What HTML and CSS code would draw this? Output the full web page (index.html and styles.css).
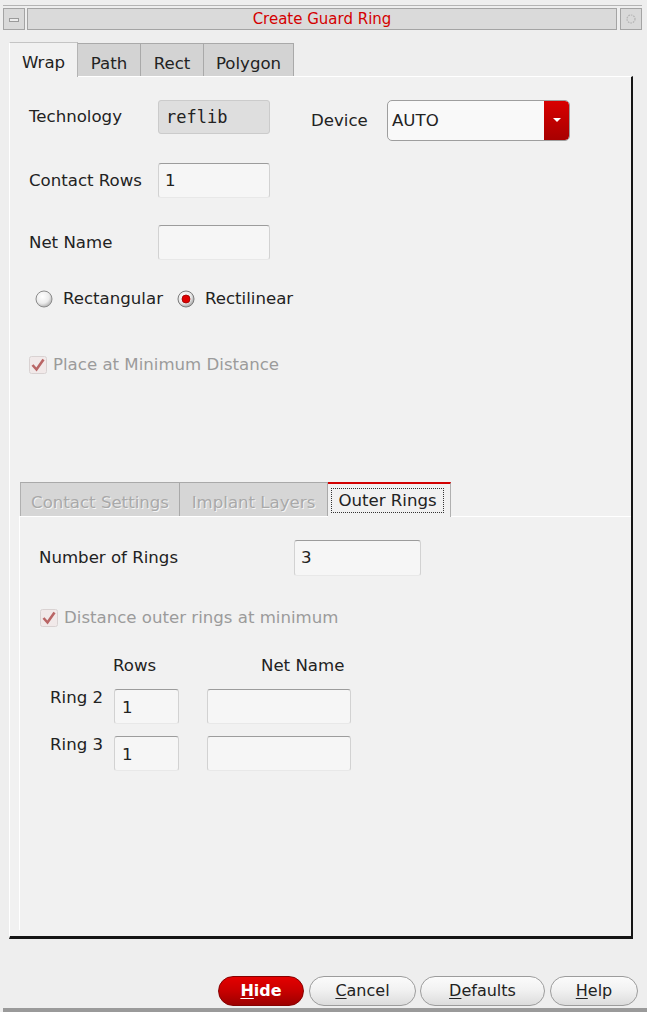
FILE: index.html
```html
<!DOCTYPE html>
<html>
<head>
<meta charset="utf-8">
<title>Create Guard Ring</title>
<link rel="stylesheet" href="styles.css">
</head>
<body>
<div class="window">
  <div class="topline"></div>
  <div class="titlebar">
    <div class="tb-btn"><span class="minbar"></span></div>
    <div class="tb-title">Create Guard Ring</div>
    <div class="tb-btn">
      <svg width="12" height="12" viewBox="0 0 12 12"><circle cx="6" cy="6" r="4" fill="none" stroke="#b4b4b4" stroke-width="1.2" stroke-dasharray="1.6 1"/></svg>
    </div>
  </div>

  <div class="tabs outer-tabs">
    <div class="tab active t-wrap">Wrap</div>
    <div class="tab t-path">Path</div>
    <div class="tab t-rect">Rect</div>
    <div class="tab t-poly">Polygon</div>
  </div>

  <div class="panel">
    <div class="form">
      <div class="row r1">
        <div class="lbl lbl-tech">Technology</div>
        <div class="field ro">reflib</div>
        <div class="lbl lbl-dev">Device</div>
        <div class="combo">
          <span class="combo-text">AUTO</span>
          <span class="combo-btn">
            <svg width="10" height="6" viewBox="0 0 10 6"><polygon points="1,1 9,1 5,5" fill="#fff"/></svg>
          </span>
        </div>
      </div>
      <div class="row r2">
        <div class="lbl lbl-tech lh35">Contact Rows</div>
        <div class="field txt w112">1</div>
      </div>
      <div class="row r3">
        <div class="lbl lbl-tech lh35">Net Name</div>
        <div class="field txt w112"></div>
      </div>
      <div class="row radios">
        <span class="radio">
          <svg width="18" height="18" viewBox="0 0 18 18">
            <defs>
              <radialGradient id="rg1" cx="40%" cy="35%" r="70%">
                <stop offset="0" stop-color="#ffffff"/>
                <stop offset="0.6" stop-color="#ececec"/>
                <stop offset="1" stop-color="#a9a9a9"/>
              </radialGradient>
            </defs>
            <circle cx="9" cy="9" r="8" fill="url(#rg1)" stroke="#8c8c8c" stroke-width="1"/>
          </svg>
        </span>
        <span class="radio-lbl">Rectangular</span>
        <span class="radio r-second">
          <svg width="18" height="18" viewBox="0 0 18 18">
            <defs>
              <radialGradient id="rg2" cx="40%" cy="35%" r="70%">
                <stop offset="0" stop-color="#ffffff"/>
                <stop offset="0.6" stop-color="#e8e8e8"/>
                <stop offset="1" stop-color="#9c9c9c"/>
              </radialGradient>
            </defs>
            <circle cx="9" cy="9" r="8" fill="url(#rg2)" stroke="#7c7c7c" stroke-width="1"/>
            <circle cx="9" cy="9" r="4" fill="#e00000" stroke="#9a0000" stroke-width="0.8"/>
          </svg>
        </span>
        <span class="radio-lbl">Rectilinear</span>
      </div>
      <div class="row check c-place">
        <span class="cbox">
          <svg width="18" height="18" viewBox="0 0 18 18">
            <rect x="0.5" y="0.5" width="17" height="17" rx="2" fill="#f1e9e9" stroke="#d9d2d2"/>
            <path d="M3.5 9 L7.5 13.5 L14.5 3.5" fill="none" stroke="#b96565" stroke-width="2.6"/>
          </svg>
        </span>
        <span class="dis">Place at Minimum Distance</span>
      </div>
    </div>

    <div class="notebook inner">
      <div class="tabs inner-tabs">
        <div class="tab itab dis-tab t-cs">Contact Settings</div>
        <div class="tab itab dis-tab t-il">Implant Layers</div>
        <div class="tab itab iactive t-or"><span class="focus">Outer Rings</span></div>
      </div>
      <div class="subpanel">
        <div class="row nrow">
          <div class="lbl lbl-num">Number of Rings</div>
          <div class="field txt w127">3</div>
        </div>
        <div class="row check c-dist">
          <span class="cbox">
            <svg width="18" height="18" viewBox="0 0 18 18">
              <rect x="0.5" y="0.5" width="17" height="17" rx="2" fill="#f1e9e9" stroke="#d9d2d2"/>
              <path d="M3.5 9 L7.5 13.5 L14.5 3.5" fill="none" stroke="#b96565" stroke-width="2.6"/>
            </svg>
          </span>
          <span class="dis">Distance outer rings at minimum</span>
        </div>
        <div class="row hdr">
          <span class="h-rows">Rows</span>
          <span class="h-net">Net Name</span>
        </div>
        <div class="row ring r-ring2">
          <div class="ring-lbl">Ring 2</div>
          <div class="field txt w65 rf">1</div>
          <div class="field txt w144"></div>
        </div>
        <div class="row ring r-ring3">
          <div class="ring-lbl">Ring 3</div>
          <div class="field txt w65 rf">1</div>
          <div class="field txt w144"></div>
        </div>
      </div>
    </div>
  </div>

  <div class="buttons">
    <div class="btn primary b-hide"><u>H</u>ide</div>
    <div class="btn b-cancel"><u>C</u>ancel</div>
    <div class="btn b-def"><u>D</u>efaults</div>
    <div class="btn b-help"><u>H</u>elp</div>
  </div>
  <div class="bottombar"></div>
</div>
</body>
</html>
```

FILE: styles.css
```css
* { box-sizing: border-box; }
html, body { margin: 0; padding: 0; }
body {
  width: 647px;
  height: 1012px;
  overflow: hidden;
  background: #eeeeee;
  font-family: "DejaVu Sans", "Liberation Sans", sans-serif;
  font-size: 16.6px;
  color: #222;
}
.window { display: flex; flex-direction: column; height: 1012px; }

.topline { margin: 5px 5px 0 3px; height: 1px; background: #b4b4b4; }

.titlebar {
  display: flex;
  margin: 2px 5px 0 3px;
  height: 22px;
}
.tb-btn {
  width: 22px;
  height: 22px;
  background: #d9d9d9;
  border: 1px solid #a4a4a4;
  display: flex;
  align-items: center;
  justify-content: center;
}
.minbar {
  width: 10px;
  height: 4px;
  background: #ececec;
  border: 1px solid #9a9a9a;
  margin-top: 1px;
}
.tb-title {
  flex: 1;
  margin: 0 3px 0 2px;
  background: #dadada;
  border: 1px solid #a4a4a4;
  color: #d40000;
  font-size: 15px;
  text-align: center;
  line-height: 20px;
}

/* outer tabs */
.tabs { display: flex; align-items: flex-end; }
.outer-tabs { margin-top: 11px; padding-left: 9px; height: 35px; position: relative; z-index: 2; }
.tab {
  height: 33px;
  background: #d3d3d3;
  border: 1px solid #a9a9a9;
  border-bottom: none;
  border-left: none;
  text-align: center;
  padding-top: 8px;
  line-height: 24px;
  color: #222;
}
.tab.active {
  height: 35px;
  margin-bottom: -1px;
  background: #f1f1f1;
  border-left: 1px solid #ffffff;
  border-top: 1px solid #c4c4c4;
  border-right: 1px solid #b4b4b4;
}
.t-wrap { width: 69px; }
.t-path { width: 63px; }
.t-rect { width: 63px; }
.t-poly { width: 90px; }

.panel {
  margin-left: 9px;
  width: 624px;
  height: 864px;
  background: #f1f1f1;
  border-top: 1px solid #ffffff;
  border-left: 1px solid #ffffff;
  border-right: 2px solid #151515;
  border-bottom: 3px solid #151515;
  padding: 23px 0 6px 9px;
  display: flex;
  flex-direction: column;
}
.form { padding-left: 10px; }
.row { display: flex; align-items: flex-start; }

.lbl { white-space: nowrap; }
.lbl-tech { width: 129px; height: 34px; line-height: 34px; }
.lh35 { height: 35px; line-height: 35px; }
.lbl-dev { width: 76px; margin-left: 41px; height: 41px; line-height: 41px; }

.field {
  height: 35px;
  line-height: 33px;
  padding-left: 6px;
  background: #f6f6f6;
  border: 1px solid #d2d2d2;
  border-top-color: #9c9c9c;
  border-bottom-color: #e8e8e8;
  border-radius: 3px;
}
.field.ro {
  width: 112px;
  height: 34px;
  line-height: 32px;
  padding-left: 7px;
  background: #dedede;
  border: 1px solid #cbcbcb;
  font-family: "DejaVu Sans Mono", "Liberation Mono", monospace;
  font-size: 17px;
}
.w112 { width: 112px; }
.w127 { width: 127px; height: 36px; line-height: 34px; }
.w65 { width: 65px; }
.w144 { width: 144px; }
.rf { padding-left: 7px; line-height: 35px; }

.combo {
  width: 183px;
  height: 41px;
  display: flex;
  background: #f9f9f9;
  border: 1px solid #9e9e9e;
  border-radius: 5px;
  overflow: hidden;
}
.combo-text { flex: 1; line-height: 39px; padding-left: 4px; }
.combo-btn {
  width: 25px;
  background: linear-gradient(#d80000, #a80000);
  display: flex;
  align-items: center;
  justify-content: center;
  border-radius: 0 4px 4px 0;
}
.r2 { margin-top: 22px; }
.r3 { margin-top: 27px; }

.radios { margin-top: 30px; height: 18px; align-items: center; padding-left: 6px; }
.radio { width: 18px; height: 18px; display: block; }
.radio svg { display: block; }
.radio-lbl { margin-left: 10px; line-height: 18px; }
.r-second { margin-left: 14px; }

.check { height: 18px; align-items: center; }
.cbox { width: 18px; height: 18px; display: block; }
.cbox svg { display: block; }
.dis { color: #9b9b9b; margin-left: 7px; line-height: 18px; white-space: nowrap; }
.c-place { margin-top: 48px; padding-left: 0; }
.c-place .dis { margin-left: 6px; }

/* inner notebook */
.notebook.inner {
  margin-top: 108px;
  flex: 1;
  display: flex;
  flex-direction: column;
}
.inner-tabs { padding-left: 1px; height: 34px; position: relative; z-index: 2; }
.itab { height: 34px; }
.tab.itab:first-child { border-left: 1px solid #b0b0b0; }
.dis-tab { color: #a9a9a9; text-shadow: 1px 1px 0 #f4f4f4; background: #d6d6d6; }
.t-cs { width: 160px; }
.t-il { width: 148px; }
.t-or {
  width: 123px;
  background: #f1f1f1;
  border-top: 2px solid #d20000;
  border-right: 1px solid #b0b0b0;
  padding-top: 4px;
  padding-left: 3px;
  text-align: left;
  height: 35px;
  margin-bottom: -1px;
}
.focus {
  display: inline-block;
  width: 113px;
  height: 25px;
  line-height: 23px;
  border: 1px dotted #333;
  text-align: center;
}
.subpanel {
  flex: 1;
  border-top: 1px solid #ffffff;
  border-left: 1px solid #ffffff;
  padding: 23px 0 0 19px;
}
.lbl-num { width: 255px; height: 36px; line-height: 36px; }
.c-dist { margin-top: 33px; padding-left: 1px; }
.c-dist .dis { margin-left: 6px; }
.hdr { margin-top: 29px; height: 20px; line-height: 20px; padding-left: 74px; }
.h-rows { width: 148px; }
.ring { padding-left: 11px; }
.r-ring2 { margin-top: 13px; }
.r-ring3 { margin-top: 12px; }
.ring-lbl { width: 64px; line-height: 20px; margin-top: -1px; }
.ring .w144 { margin-left: 28px; }

/* buttons */
.buttons {
  margin-top: 37px;
  height: 30px;
  display: flex;
  justify-content: flex-end;
  padding-right: 9px;
  gap: 5px;
}
.btn {
  height: 30px;
  border-radius: 15px;
  border: 1px solid #9c9c9c;
  background: linear-gradient(#fbfbfb 0%, #f2f2f2 45%, #dcdcdc 100%);
  text-align: center;
  line-height: 28px;
  color: #222;
  font-size: 16px;
}
.btn u { text-decoration-thickness: 1px; text-underline-offset: 2px; }
.btn.primary {
  background: linear-gradient(#e40000 0%, #c80000 50%, #9c0000 100%);
  border-color: #860000;
  color: #ffffff;
  font-weight: bold;
}
.b-hide { width: 86px; }
.b-cancel { width: 107px; }
.b-def { width: 125px; margin-left: -1px; }
.b-help { width: 88px; }

.bottombar { margin: 2px 0 0 3px; height: 4px; background: #9a9a9a; }
```
